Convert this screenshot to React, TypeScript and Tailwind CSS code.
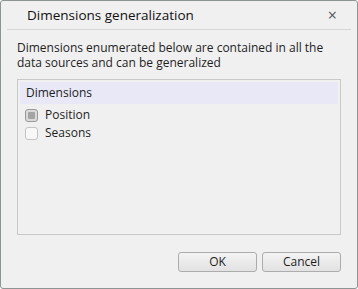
import React, { useState } from 'react';

const font = { fontFamily: '"Open Sans", "Noto Sans", sans-serif' };

export default function App() {
  const [items, setItems] = useState([
    { name: 'Position', checked: true },
    { name: 'Seasons', checked: false },
  ]);

  const toggle = (i: number) =>
    setItems(items.map((it, j) => (j === i ? { ...it, checked: !it.checked } : it)));

  return (
    <div className="w-[358px] h-[289px] bg-white" style={font}>
      <div className="w-full h-full flex flex-col bg-[#f0f0f0] border border-[#8c9494] rounded-[3px] text-[#1e1e1e]">
        {/* Title bar */}
        <div className="flex items-center justify-between h-[28px] pl-[26px] pr-[20px]">
          <span className="text-[13.5px] text-[#111]">Dimensions generalization</span>
          <span className="text-[16px] text-[#555] leading-none">×</span>
        </div>
        <div className="mx-[6px] h-px bg-[#d6d6d6]" />

        {/* Body */}
        <div className="flex flex-col flex-1 px-[16px]">
          <p className="mt-[10px] text-[12px] leading-[15px]">
            Dimensions enumerated below are contained in all the data sources and can be generalized
          </p>

          <div className="mt-[9px] h-[156px] border border-[#c9c9c9] p-[2px] flex flex-col">
            <div className="h-[22px] bg-[#e8e8f6] flex items-center px-[6px] text-[12px]">Dimensions</div>
            <div className="flex flex-col pt-[4px] gap-[4px]">
              {items.map((it, i) => (
                <label key={it.name} className="flex items-center gap-[7px] pl-[5px] h-[14px] text-[12px] cursor-default" onClick={() => toggle(i)}>
                  <span
                    className={`w-[13px] h-[13px] rounded-[3px] border ${
                      it.checked
                        ? 'border-[#9a9a9a] bg-[#dadada]'
                        : 'border-[#c4c4c4] bg-[#f8f8f8]'
                    }`}
                  >
                    {it.checked && <span className="block m-[2px] w-[7px] h-[7px] bg-[#a4a4a4] rounded-[1px]" />}
                  </span>
                  {it.name}
                </label>
              ))}
            </div>
          </div>

          {/* Buttons */}
          <div className="flex justify-end gap-[5px] mt-[17px]">
            <button className="w-[79px] h-[20px] rounded-[3px] border border-[#acacac] bg-gradient-to-b from-[#f3f3f3] to-[#e2e2e2] text-[12px] leading-none">
              OK
            </button>
            <button className="w-[79px] h-[20px] rounded-[3px] border border-[#acacac] bg-gradient-to-b from-[#f3f3f3] to-[#e2e2e2] text-[12px] leading-none">
              Cancel
            </button>
          </div>
        </div>
      </div>
    </div>
  );
}
